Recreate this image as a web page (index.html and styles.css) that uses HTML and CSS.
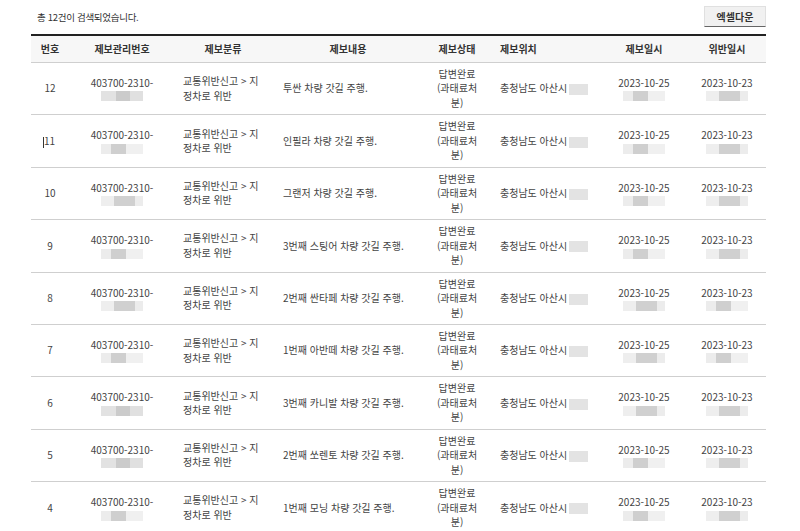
FILE: index.html
```html
<!DOCTYPE html>
<html lang="ko">
<head>
<meta charset="utf-8">
<title>제보 목록</title>
<link rel="stylesheet" href="styles.css">
</head>
<body>
<div class="page">
  <div class="topbar">
    <p class="count">총 12건이 검색되었습니다.</p>
    <button class="excel">엑셀다운</button>
  </div>
  <div class="grid">
    <div class="row head">
      <div class="c c-no">번호</div>
      <div class="c c-id">제보관리번호</div>
      <div class="c c-cat">제보분류</div>
      <div class="c c-body">제보내용</div>
      <div class="c c-st">제보상태</div>
      <div class="c c-loc">제보위치</div>
      <div class="c c-d1">제보일시</div>
      <div class="c c-d2">위반일시</div>
    </div>

    <div class="row">
      <div class="c c-no">12</div>
      <div class="c c-id">403700-2310-<span class="blur b1"></span></div>
      <div class="c c-cat">교통위반신고 &gt; 지<br>정차로 위반</div>
      <div class="c c-body">투싼 차량 갓길 주행.</div>
      <div class="c c-st">답변완료<br>(과태료처<br>분)</div>
      <div class="c c-loc">충청남도 아산시<span class="blur bl"></span></div>
      <div class="c c-d1">2023-10-25<span class="blur b2"></span></div>
      <div class="c c-d2">2023-10-23<span class="blur b3"></span></div>
    </div>

    <div class="row">
      <div class="c c-no"><span class="caret"></span>11</div>
      <div class="c c-id">403700-2310-<span class="blur b2"></span></div>
      <div class="c c-cat">교통위반신고 &gt; 지<br>정차로 위반</div>
      <div class="c c-body">인필라 차량 갓길 주행.</div>
      <div class="c c-st">답변완료<br>(과태료처<br>분)</div>
      <div class="c c-loc">충청남도 아산시<span class="blur bl"></span></div>
      <div class="c c-d1">2023-10-25<span class="blur b2"></span></div>
      <div class="c c-d2">2023-10-23<span class="blur b3"></span></div>
    </div>

    <div class="row">
      <div class="c c-no">10</div>
      <div class="c c-id">403700-2310-<span class="blur b3"></span></div>
      <div class="c c-cat">교통위반신고 &gt; 지<br>정차로 위반</div>
      <div class="c c-body">그랜저 차량 갓길 주행.</div>
      <div class="c c-st">답변완료<br>(과태료처<br>분)</div>
      <div class="c c-loc">충청남도 아산시<span class="blur bl"></span></div>
      <div class="c c-d1">2023-10-25<span class="blur b2"></span></div>
      <div class="c c-d2">2023-10-23<span class="blur b3"></span></div>
    </div>

    <div class="row">
      <div class="c c-no">9</div>
      <div class="c c-id">403700-2310-<span class="blur b2"></span></div>
      <div class="c c-cat">교통위반신고 &gt; 지<br>정차로 위반</div>
      <div class="c c-body">3번째 스팅어 차량 갓길 주행.</div>
      <div class="c c-st">답변완료<br>(과태료처<br>분)</div>
      <div class="c c-loc">충청남도 아산시<span class="blur bl"></span></div>
      <div class="c c-d1">2023-10-25<span class="blur b2"></span></div>
      <div class="c c-d2">2023-10-23<span class="blur b3"></span></div>
    </div>

    <div class="row">
      <div class="c c-no">8</div>
      <div class="c c-id">403700-2310-<span class="blur b3"></span></div>
      <div class="c c-cat">교통위반신고 &gt; 지<br>정차로 위반</div>
      <div class="c c-body">2번째 싼타페 차량 갓길 주행.</div>
      <div class="c c-st">답변완료<br>(과태료처<br>분)</div>
      <div class="c c-loc">충청남도 아산시<span class="blur bl"></span></div>
      <div class="c c-d1">2023-10-25<span class="blur b3"></span></div>
      <div class="c c-d2">2023-10-23<span class="blur b2"></span></div>
    </div>

    <div class="row">
      <div class="c c-no">7</div>
      <div class="c c-id">403700-2310-<span class="blur b2"></span></div>
      <div class="c c-cat">교통위반신고 &gt; 지<br>정차로 위반</div>
      <div class="c c-body">1번째 아반떼 차량 갓길 주행.</div>
      <div class="c c-st">답변완료<br>(과태료처<br>분)</div>
      <div class="c c-loc">충청남도 아산시<span class="blur bl"></span></div>
      <div class="c c-d1">2023-10-25<span class="blur b3"></span></div>
      <div class="c c-d2">2023-10-23<span class="blur b2"></span></div>
    </div>

    <div class="row">
      <div class="c c-no">6</div>
      <div class="c c-id">403700-2310-<span class="blur b1"></span></div>
      <div class="c c-cat">교통위반신고 &gt; 지<br>정차로 위반</div>
      <div class="c c-body">3번째 카니발 차량 갓길 주행.</div>
      <div class="c c-st">답변완료<br>(과태료처<br>분)</div>
      <div class="c c-loc">충청남도 아산시<span class="blur bl"></span></div>
      <div class="c c-d1">2023-10-25<span class="blur b3"></span></div>
      <div class="c c-d2">2023-10-23<span class="blur b3"></span></div>
    </div>

    <div class="row">
      <div class="c c-no">5</div>
      <div class="c c-id">403700-2310-<span class="blur b1"></span></div>
      <div class="c c-cat">교통위반신고 &gt; 지<br>정차로 위반</div>
      <div class="c c-body">2번째 쏘렌토 차량 갓길 주행.</div>
      <div class="c c-st">답변완료<br>(과태료처<br>분)</div>
      <div class="c c-loc">충청남도 아산시<span class="blur bl"></span></div>
      <div class="c c-d1">2023-10-25<span class="blur b2"></span></div>
      <div class="c c-d2">2023-10-23<span class="blur b3"></span></div>
    </div>

    <div class="row">
      <div class="c c-no">4</div>
      <div class="c c-id">403700-2310-<span class="blur b2"></span></div>
      <div class="c c-cat">교통위반신고 &gt; 지<br>정차로 위반</div>
      <div class="c c-body">1번째 모닝 차량 갓길 주행.</div>
      <div class="c c-st">답변완료<br>(과태료처<br>분)</div>
      <div class="c c-loc">충청남도 아산시<span class="blur bl"></span></div>
      <div class="c c-d1">2023-10-25<span class="blur b2"></span></div>
      <div class="c c-d2">2023-10-23<span class="blur b3"></span></div>
    </div>
  </div>
</div>
</body>
</html>
```

FILE: styles.css
```css
* { box-sizing: border-box; }
html, body {
  margin: 0;
  padding: 0;
  background: #fff;
}
body {
  font-family: "Noto Sans CJK KR", "Noto Sans", sans-serif;
  font-size: 10px;
  color: #444;
}
.page {
  width: 766px;
  padding: 6px 0 0 31px;
}
.topbar {
  display: flex;
  justify-content: space-between;
  align-items: center;
  height: 21px;
  margin-bottom: 7px;
}
.count {
  margin: 0 0 0 6px;
  font-size: 9.5px;
  color: #333;
  letter-spacing: -0.3px;
}
.excel {
  width: 62px;
  height: 21px;
  padding: 0;
  font-family: inherit;
  font-size: 10px;
  font-weight: 700;
  color: #333;
  background: #f1f1f1;
  border: 1px solid #e0e0e0;
  border-bottom: 1px solid #666;
}
.grid {
  border-top: 2px solid #222;
}
.row {
  display: grid;
  grid-template-columns: 38px 106px 96px 154px 64px 111px 88px 78px;
  height: 52.4px;
  border-bottom: 1px solid #cfcfcf;
  align-items: center;
  line-height: 14.5px;
}
.row.head {
  height: 27px;
  background: #f7f7f7;
  font-weight: 700;
  color: #333;
}
.c {
  text-align: center;
  white-space: nowrap;
}
.row .c-cat {
  text-align: left;
  padding-left: 8px;
}
.row .c-body {
  text-align: left;
  padding-left: 12px;
}
.row .c-loc {
  text-align: left;
  padding-left: 11px;
}
.row.head .c-cat, .row.head .c-body {
  text-align: center;
  padding-left: 0;
}
.row.head .c-loc { padding-left: 11px; }
.blur {
  display: block;
  width: 42px;
  height: 10px;
  margin: 1px auto 0;
  filter: blur(0.6px);
}
.b1 { background: linear-gradient(90deg, #e2e2e2 0 35%, #cbcbcb 35% 70%, #e0e0e0 70%); }
.b2 { background: linear-gradient(90deg, #ececec 0 25%, #cfcfcf 25% 60%, #f0f0f0 60%); }
.b3 { background: linear-gradient(90deg, #eeeeee 0 30%, #d0d0d0 30% 80%, #ececec 80%); }
.c-loc .bl {
  display: inline-block;
  vertical-align: middle;
  width: 19px;
  height: 11px;
  margin: 0 0 0 2px;
  background: #e3e3e3;
}
.caret {
  display: inline-block;
  width: 1px;
  height: 11px;
  background: #333;
  vertical-align: middle;
  margin-left: -2px;
}
```
